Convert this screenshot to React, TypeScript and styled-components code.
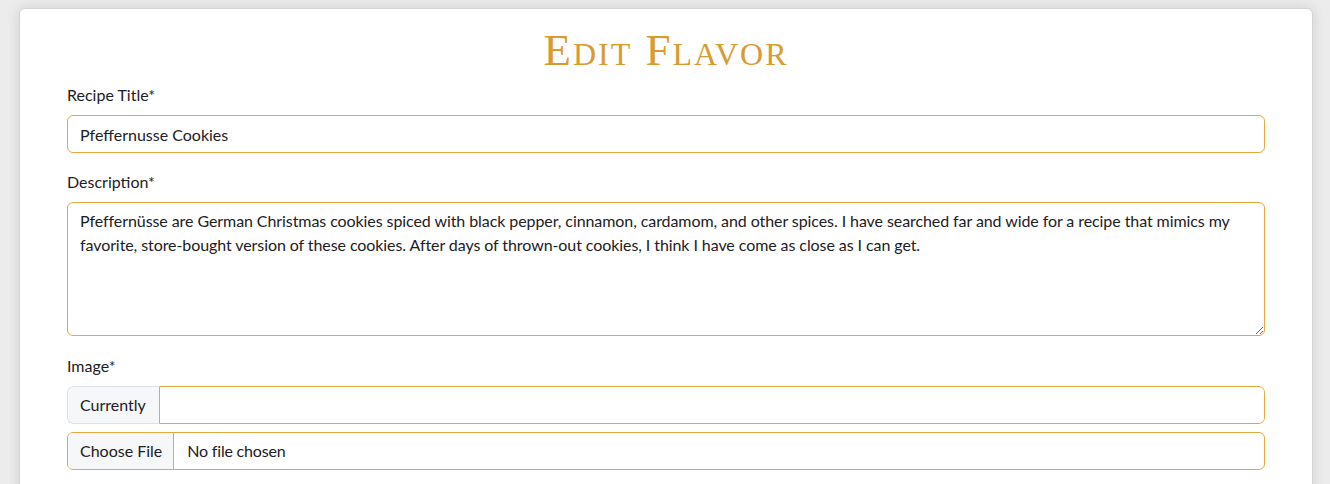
import React from "react";
import styled, { createGlobalStyle } from "styled-components";

const Global = createGlobalStyle`
  html, body { margin: 0; padding: 0; }
  body {
    background: #ececec;
    font-family: Lato, "Noto Sans", sans-serif;
    font-size: 16px;
    line-height: 1.5;
    color: #1d2024;
  }
  * { box-sizing: border-box; }
`;

const GOLD = "#e6a83c";

const Page = styled.div`
  padding: 8px 17px 0 19px;
  height: 484px;
  overflow: hidden;
`;

const Card = styled.main`
  background: #fff;
  border: 1px solid #d4d4d4;
  border-radius: 6px;
  box-shadow: 0 0 14px rgba(0, 0, 0, 0.12);
  padding: 12px 47px 40px;
  min-height: 600px;
`;

const Title = styled.h1`
  margin: 0 0 2px;
  text-align: center;
  font-family: "Liberation Serif", "DejaVu Serif", serif;
  font-variant: small-caps;
  font-weight: 400;
  font-size: 45px;
  line-height: 58px;
  padding-bottom: 2px;
  color: #d99a30;
  letter-spacing: 2px;
`;

const Field = styled.div<{ $last?: boolean }>`
  margin-bottom: ${(p) => (p.$last ? "18px" : "17px")};
`;

const Label = styled.label`
  display: block;
  margin-bottom: 8px;
  line-height: 24px;
`;

const TextInput = styled.input`
  display: block;
  width: 100%;
  height: 38px;
  padding: 6px 12px;
  font: inherit;
  color: inherit;
  background: #fff;
  border: 1px solid ${GOLD};
  border-radius: 6px;
  outline: none;
`;

const TextArea = styled.textarea`
  display: block;
  width: 100%;
  height: 134px;
  padding: 6px 12px;
  font: inherit;
  line-height: 24px;
  letter-spacing: -0.08px;
  color: inherit;
  background: #fff;
  border: 1px solid ${GOLD};
  border-radius: 6px;
  resize: vertical;
  outline: none;
`;

const Group = styled.div<{ $framed?: boolean }>`
  display: flex;
  height: 38px;
  margin-bottom: 8px;
  border-radius: 6px;
  border: ${(p) => (p.$framed ? `1px solid ${GOLD}` : "none")};
  overflow: hidden;
`;

const Addon = styled.span`
  display: flex;
  align-items: center;
  padding: 0 13px 0 12px;
  background: #f6f7f8;
  border: 1px solid #dee2e6;
  border-right: none;
  border-radius: 6px 0 0 6px;
  white-space: nowrap;
`;

const GroupInput = styled.input`
  flex: 1;
  min-width: 0;
  font: inherit;
  padding: 6px 12px;
  border: 1px solid ${GOLD};
  border-radius: 0 6px 6px 0;
  outline: none;
`;

const FileButton = styled.span`
  display: flex;
  align-items: center;
  padding: 0 11px 0 12px;
  background: #f6f7f8;
  border-right: 1px solid ${GOLD};
  white-space: nowrap;
`;

const FileName = styled.span`
  display: flex;
  align-items: center;
  padding: 0 13px;
  letter-spacing: -0.2px;
`;

export default function App() {
  return (
    <>
      <Global />
      <Page>
        <Card>
          <Title>Edit Flavor</Title>
          <Field>
            <Label>Recipe Title*</Label>
            <TextInput defaultValue="Pfeffernusse Cookies" />
          </Field>
          <Field $last>
            <Label>Description*</Label>
            <TextArea
              rows={5}
              defaultValue="Pfeffernüsse are German Christmas cookies spiced with black pepper, cinnamon, cardamom, and other spices. I have searched far and wide for a recipe that mimics my favorite, store-bought version of these cookies. After days of thrown-out cookies, I think I have come as close as I can get."
            />
          </Field>
          <div>
            <Label>Image*</Label>
            <Group>
              <Addon>Currently</Addon>
              <GroupInput />
            </Group>
            <Group $framed>
              <FileButton>Choose File</FileButton>
              <FileName>No file chosen</FileName>
            </Group>
          </div>
        </Card>
      </Page>
    </>
  );
}
